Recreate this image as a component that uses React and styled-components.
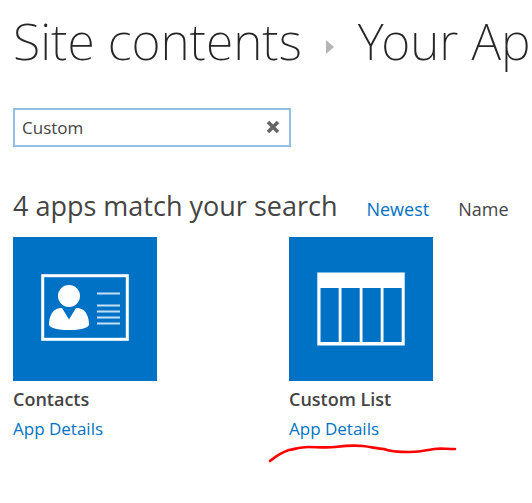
import React, { useState } from "react";
import styled, { createGlobalStyle } from "styled-components";

const GlobalStyle = createGlobalStyle`
  * { box-sizing: border-box; }
  body {
    margin: 0;
    background: #fff;
    color: #444;
    font-family: "Open Sans", "Noto Sans", sans-serif;
    font-size: 17px;
    font-weight: 400;
  }
`;

const Page = styled.main`
  padding: 7px 0 32px 13px;
  overflow: hidden;
`;

const Title = styled.h1`
  display: flex;
  align-items: center;
  gap: 24px;
  margin: 0;
  font-family: "Noto Sans", "Open Sans", sans-serif;
  font-size: 50px;
  line-height: 68px;
  font-weight: 250;
  color: #262626;
  white-space: nowrap;
`;

const Chevron = styled.svg`
  flex: none;
  width: 8px;
  height: 14px;
  margin-top: 12px;
`;

const SearchBox = styled.form`
  display: flex;
  align-items: center;
  width: 278px;
  height: 39px;
  margin-top: 33px;
  border: 2px solid #92c0e0;
`;

const SearchInput = styled.input`
  flex: 1;
  min-width: 0;
  height: 100%;
  padding: 0 7px;
  border: 0;
  outline: 0;
  background: transparent;
  color: #444;
  font: inherit;
`;

const ClearButton = styled.button`
  display: flex;
  align-items: center;
  justify-content: center;
  width: 33px;
  height: 100%;
  padding: 0 0 2px;
  border: 0;
  background: transparent;
  cursor: pointer;
`;

const ResultsBar = styled.div`
  display: flex;
  align-items: baseline;
  gap: 29px;
  margin-top: 39px;
  line-height: 40px;
  white-space: nowrap;
`;

const ResultsHeading = styled.h2`
  margin: 0;
  font-size: 27px;
  font-weight: 400;
`;

const SortLink = styled.a`
  font-size: 18px;
  color: ${(p) => (p.$active ? "#444" : "#0072c6")};
  text-decoration: none;
`;

const AppGrid = styled.ul`
  display: grid;
  grid-template-columns: repeat(auto-fill, 144px);
  column-gap: 132px;
  row-gap: 32px;
  margin: 8px 0 0;
  padding: 0;
  list-style: none;
`;

const AppCard = styled.li`
  position: relative;
`;

const Tile = styled.div`
  display: flex;
  height: 144px;
  background: #0072c6;
`;

const AppName = styled.h3`
  margin: 4px 0 0;
  font-size: 18px;
  line-height: 28px;
  font-weight: 600;
`;

const DetailsLink = styled.a`
  display: block;
  line-height: 32px;
  color: #0072c6;
  text-decoration: none;
`;

const Scribble = styled.svg`
  position: absolute;
  top: 204px;
  left: -24px;
  width: 194px;
  height: 26px;
  pointer-events: none;
`;

const ContactsIcon = () => (
  <svg width="144" height="144" viewBox="0 0 144 144" aria-hidden="true">
    <rect x="29.7" y="38.7" width="84.6" height="63.6" fill="none" stroke="#fff" strokeWidth="3" />
    <circle cx="56" cy="59" r="11" fill="#fff" />
    <path d="M49 71L56 82.500L63 71Q70 71 73 76Q76 81 76 88Q73 93 56 93Q39 93 36 88Q36 81 39 76Q42 71 49 71Z" fill="#fff" />
    <path d="M84 56.500H107M84 68.500H107M84 74.500H107M84 80.500H107M84 86.500H107" stroke="#c4dff3" strokeWidth="2" />
  </svg>
);

const ListIcon = () => (
  <svg width="144" height="144" viewBox="0 0 144 144" aria-hidden="true">
    <path
      fill="#fff"
      fillRule="evenodd"
      d="M28.300 35.400H115.700V108.500H28.300ZM31.500 51V105H49.700V51ZM52.500 51V105H70.700V51ZM73.500 51V105H91.700V51ZM94.500 51V105H112.700V51Z"
    />
  </svg>
);

const apps = [
  { name: "Contacts", Icon: ContactsIcon },
  { name: "Custom List", Icon: ListIcon, marked: true },
];

export default function App() {
  const [query, setQuery] = useState("Custom");
  return (
    <>
      <GlobalStyle />
      <Page>
        <Title>
          <span>Site contents</span>
          <Chevron viewBox="0 0 8 14" aria-hidden="true">
            <path d="M0 0L8 7L0 14Z" fill="#b5b5b5" />
          </Chevron>
          <span>Your Apps</span>
        </Title>
        <SearchBox role="search" onSubmit={(e) => e.preventDefault()}>
          <SearchInput
            aria-label="Find an app"
            value={query}
            onChange={(e) => setQuery(e.target.value)}
          />
          <ClearButton type="button" aria-label="Clear search" onClick={() => setQuery("")}>
            <svg width="14" height="14" viewBox="0 0 14 14" aria-hidden="true">
              <path d="M2 2L12 12M12 2L2 12" stroke="#666" strokeWidth="3.600" />
            </svg>
          </ClearButton>
        </SearchBox>
        <ResultsBar>
          <ResultsHeading>4 apps match your search</ResultsHeading>
          <SortLink href="#newest">Newest</SortLink>
          <SortLink href="#name" $active>Name</SortLink>
        </ResultsBar>
        <AppGrid>
          {apps.map(({ name, Icon, marked }) => (
            <AppCard key={name}>
              <Tile><Icon /></Tile>
              <AppName>{name}</AppName>
              <DetailsLink href="#details">App Details</DetailsLink>
              {marked && (
                <Scribble viewBox="0 0 194 26" aria-hidden="true">
                  <path
                    d="M5 20C11 15 18 11 24 9C30 8 36 6 43 6C51 6 62 7 70 6C78 5 88 4 98 5C107 6 113 8 119 8C125 11 134 11 145 11C157 11 162 9 169 8C174 7 181 8 190 8"
                    fill="none"
                    stroke="#f00"
                    strokeWidth="2.600"
                    strokeLinecap="round"
                    strokeLinejoin="round"
                  />
                </Scribble>
              )}
            </AppCard>
          ))}
        </AppGrid>
      </Page>
    </>
  );
}
